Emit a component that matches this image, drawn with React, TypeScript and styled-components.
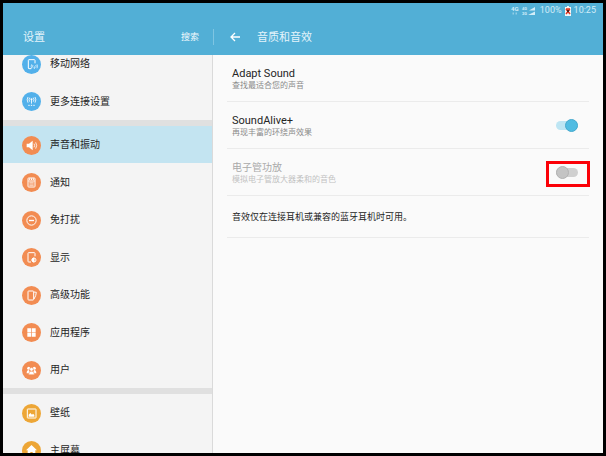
import React, { useState } from "react";
import styled, { createGlobalStyle, css } from "styled-components";

const GlobalStyle = createGlobalStyle`
  *, *::before, *::after { box-sizing: border-box; }
  body {
    margin: 0;
    background: #000;
    font-family: Roboto, "Noto Sans CJK SC", sans-serif;
  }
  button, input { font: inherit; }
`;

const Screen = styled.div`
  height: 100vh;
  padding: 3px;
  background: #000;
  display: flex;
  flex-direction: column;
`;

const TopBar = styled.header`
  flex: none;
  background: #52afd6;
  color: #e4f4fb;
`;

const StatusBar = styled.div`
  display: flex;
  align-items: center;
  justify-content: flex-end;
  gap: 3px;
  height: 15px;
  padding-right: 7px;
  font-size: 9px;
  line-height: 15px;
  color: #d3edf8;
`;

const TitleBar = styled.div`
  display: flex;
  height: 37px;
`;

const sidebarWidth = css`
  flex: 0 0 35%;
`;

const SidebarTitle = styled.div`
  ${sidebarWidth}
  display: flex;
  align-items: center;
  justify-content: space-between;
  padding: 0 14px 0 20px;
`;

const Title = styled.h1`
  margin: 0;
  padding-top: 2px;
  font-size: 11px;
  line-height: 16px;
  font-weight: 400;
`;

const SearchButton = styled.button`
  padding: 0;
  border: 0;
  background: none;
  color: #f2fafd;
  font-size: 9px;
  line-height: 16px;
`;

const DetailTitle = styled.div`
  flex: 1;
  display: flex;
  align-items: center;
  gap: 16px;
`;

const TitleDivider = styled.span`
  width: 1px;
  height: 16px;
  background: #7fc5e2;
`;

const BackButton = styled.button`
  display: flex;
  padding: 0;
  border: 0;
  background: none;
  color: #fff;
`;

const Panels = styled.div`
  flex: 1;
  min-height: 0;
  display: flex;
`;

const Sidebar = styled.nav`
  ${sidebarWidth}
  overflow: hidden;
  background: #f4f4f4;
  border-right: 1px solid #dadada;
`;

const Group = styled.ul<{ $scrolled?: boolean }>`
  list-style: none;
  margin: ${(p) => (p.$scrolled ? "-10px" : "0")} 0 0;
  padding: 0;

  & + & {
    border-top: 6px solid #e0e0e0;
  }
`;

const Entry = styled.li`
  & > a {
    height: 37px;
  }
  &:nth-child(even) > a {
    height: 38px;
  }
`;

const EntryLink = styled.a<{ $active: boolean }>`
  display: flex;
  align-items: center;
  gap: 9px;
  padding: 1px 0 0 19px;
  background: ${(p) => (p.$active ? "#c3e4f1" : "transparent")};
  color: #252525;
  font-size: 10px;
  line-height: 16px;
  text-decoration: none;
`;

const Detail = styled.main`
  flex: 1;
  padding: 0 14px;
  background: #fafafa;
`;

const Setting = styled.div<{ $disabled?: boolean }>`
  display: flex;
  align-items: center;
  justify-content: space-between;
  height: 47px;
  padding: 0 11px 0 5px;
  border-bottom: 1px solid #ebebeb;
  color: ${(p) => (p.$disabled ? "#a9a9a9" : "#252525")};
`;

const SettingText = styled.label`
  display: flex;
  flex-direction: column;
  padding-top: 2px;
`;

const SettingName = styled.span<{ $cjk?: boolean }>`
  font-size: ${(p) => (p.$cjk ? "10px" : "11px")};
  line-height: 13px;
`;

const SettingHint = styled.span<{ $disabled?: boolean }>`
  font-size: 8px;
  line-height: 12px;
  color: ${(p) => (p.$disabled ? "#c2c2c2" : "#8a8a8a")};
`;

const Note = styled.p`
  margin: 0;
  padding: 14px 5px 13px;
  border-bottom: 1px solid #ebebeb;
  color: #252525;
  font-size: 9px;
  line-height: 14px;
`;

const SwitchSlot = styled.span`
  position: relative;
  display: flex;
`;

const Switch = styled.input`
  appearance: none;
  display: grid;
  align-items: center;
  width: 22px;
  height: 13px;
  margin: 0;

  &::before,
  &::after {
    content: "";
    grid-area: 1 / 1;
  }
  &::before {
    height: 9px;
    border-radius: 5px;
    background: #d0d0d0;
  }
  &::after {
    width: 13px;
    height: 13px;
    border-radius: 50%;
    background: #c4c4c4;
    border: 1px solid #b2b2b2;
  }
  &:checked::before {
    background: #bde5f3;
  }
  &:checked::after {
    justify-self: end;
    background: #50bce2;
    border-color: #45a9cd;
  }
`;

const Highlight = styled.span`
  position: absolute;
  inset: -5px -12px -8px -10px;
  border: 3px solid #fb0007;
  pointer-events: none;
`;

type IconName =
  | "mobile" | "more" | "sound" | "notice" | "dnd" | "display"
  | "advanced" | "apps" | "users" | "wallpaper" | "home";

const glyphs: Record<IconName, React.ReactNode> = {
  mobile: (
    <>
      <path d="M28 41H21a2 2 0 0 1-2-2V16a2 2 0 0 1 2-2h16a2 2 0 0 1 2 2v9" />
      <path d="M37 34v8M33 30q-3 4 0 8M41 30q3 4 0 8M29 28q-3 6 0 12M45 28q3 6 0 12" strokeWidth="2" />
    </>
  ),
  more: (
    <>
      <path d="M23 17q-4 6 0 12M34 17q4 6 0 12M18 15q-5 8 0 17M39 15q5 8 0 17M28.500 24v11" strokeWidth="2.500" />
      <circle cx="28.500" cy="22" r="3" fill="currentColor" stroke="none" />
      <path d="M19 40h4M26.500 40h4M34 40h4" />
    </>
  ),
  sound: (
    <>
      <path d="M14 23h7l11-9v29l-11-9h-7z" fill="currentColor" stroke="none" />
      <path d="M36 23q4 5.500 0 11M41 19q6 9.500 0 19" strokeWidth="2.500" />
    </>
  ),
  notice: (
    <>
      <rect x="18" y="15" width="21" height="27" rx="2" />
      <path d="M19 24h19" />
      <path d="M23 16v5M28.500 16v5M34 16v5" strokeWidth="3" />
      <path d="M22 29h13M22 33h13M22 37h13" strokeWidth="2" />
    </>
  ),
  dnd: (
    <>
      <circle cx="28.500" cy="28.500" r="14" />
      <path d="M21 28.500h15" strokeWidth="4" />
    </>
  ),
  display: (
    <>
      <path d="M27 42H20a2 2 0 0 1-2-2V16a2 2 0 0 1 2-2h17a2 2 0 0 1 2 2v9" />
      <circle cx="36" cy="36" r="6" />
      <path d="M36 30a6 6 0 0 0 0 12z" fill="currentColor" />
    </>
  ),
  advanced: (
    <>
      <rect x="18" y="15" width="17" height="27" rx="2" />
      <path d="M36 18l7 1-2 10-5 10" />
    </>
  ),
  apps: (
    <path
      d="M16 16h11.500v11.500H16zM29.500 16H41v11.500H29.500zM16 29.500h11.500V41H16zM29.500 29.500H41V41H29.500z"
      fill="currentColor" stroke="none"
    />
  ),
  users: (
    <g fill="currentColor" stroke="none">
      <circle cx="20" cy="22" r="4.500" />
      <circle cx="37" cy="22" r="4.500" />
      <path d="M14 37q0-10 7-10l3 10zM43 37q0-10-7-10l-3 10z" />
      <g stroke="#f28c52" strokeWidth="1.500">
        <path d="M20 41q0-11 8.500-11T37 41z" />
        <circle cx="28.500" cy="25" r="5.500" />
      </g>
    </g>
  ),
  wallpaper: (
    <>
      <rect x="16" y="15" width="26" height="27" rx="1" />
      <path d="M20 38v-6l5-5 5 5 3-3 4 4v5z" fill="currentColor" stroke="none" />
    </>
  ),
  home: (
    <path
      d="M28.500 12L45 28h-5v13h-8v-8h-7v8h-8V28h-5z"
      fill="currentColor" stroke="none"
    />
  ),
};

const Disc = styled.svg`
  flex: none;
  width: 19px;
  height: 19px;
  color: #fff;
`;

const EntryIcon = ({ name, color }: { name: IconName; color: string }) => (
  <Disc viewBox="0 0 57 57" fill="none" stroke="currentColor" strokeWidth="3" aria-hidden="true">
    <circle cx="28.5" cy="28.5" r="28.5" fill={color} stroke="none" />
    {glyphs[name]}
  </Disc>
);

const groups: { color: string; items: [IconName, string][] }[] = [
  { color: "#52b0ea", items: [["mobile", "移动网络"], ["more", "更多连接设置"]] },
  {
    color: "#f28c52",
    items: [
      ["sound", "声音和振动"],
      ["notice", "通知"],
      ["dnd", "免打扰"],
      ["display", "显示"],
      ["advanced", "高级功能"],
      ["apps", "应用程序"],
      ["users", "用户"],
    ],
  },
  { color: "#eda636", items: [["wallpaper", "壁纸"], ["home", "主屏幕"]] },
];

const NetworkIcons = () => (
  <svg width="26" height="10" viewBox="0 0 26 10" fill="currentColor" aria-hidden="true">
    <g fontFamily="Roboto, sans-serif" fontWeight="700">
      <text x="0" y="5" fontSize="6">4G</text>
      <text x="11" y="4" fontSize="4">4G</text>
      <text x="11" y="9" fontSize="4">2G</text>
    </g>
    <path d="M1.500 6.500h1.500v2H1.500zM4.500 6.500h1.500v2H4.500z" opacity="0.5" />
    <path d="M24 1v3.500h-6zM24 5.500V9h-7z" />
  </svg>
);

const BatteryIcon = () => (
  <svg width="6" height="10" viewBox="0 0 6 10" aria-hidden="true">
    <path d="M2 0h2v1h2v9H0V1h2z" fill="#f3f7f8" />
    <path d="M1 3l4 5M5 3L1 8M1 3h4" stroke="#e0331f" strokeWidth="1.500" fill="none" />
    <path d="M2 4h2v2H2z" fill="#51201b" />
  </svg>
);

const BackArrow = () => (
  <svg width="11" height="10" viewBox="0 0 11 10" fill="none" stroke="currentColor" strokeWidth="1.300" aria-hidden="true">
    <path d="M10 5H1M5 1L1 5l4 4" />
  </svg>
);

export default function App() {
  const [active, setActive] = useState("声音和振动");
  const [soundAlive, setSoundAlive] = useState(true);

  return (
    <>
      <GlobalStyle />
      <Screen lang="zh-CN">
        <TopBar>
          <StatusBar>
            <NetworkIcons />
            <span>100%</span>
            <BatteryIcon />
            <span>10:25</span>
          </StatusBar>
          <TitleBar>
            <SidebarTitle>
              <Title>设置</Title>
              <SearchButton type="button">搜索</SearchButton>
            </SidebarTitle>
            <DetailTitle>
              <TitleDivider />
              <BackButton type="button" aria-label="返回">
                <BackArrow />
              </BackButton>
              <Title as="h2">音质和音效</Title>
            </DetailTitle>
          </TitleBar>
        </TopBar>
        <Panels>
          <Sidebar>
            {groups.map((group, index) => (
              <Group key={group.color} $scrolled={index === 0}>
                {group.items.map(([icon, label]) => (
                  <Entry key={label}>
                    <EntryLink
                      href={`#${icon}`}
                      $active={label === active}
                      onClick={() => setActive(label)}
                    >
                      <EntryIcon name={icon} color={group.color} />
                      {label}
                    </EntryLink>
                  </Entry>
                ))}
              </Group>
            ))}
          </Sidebar>
          <Detail>
            <Setting>
              <SettingText as="div">
                <SettingName>Adapt Sound</SettingName>
                <SettingHint>查找最适合您的声音</SettingHint>
              </SettingText>
            </Setting>
            <Setting>
              <SettingText htmlFor="sound-alive">
                <SettingName>SoundAlive+</SettingName>
                <SettingHint>再现丰富的环绕声效果</SettingHint>
              </SettingText>
              <SwitchSlot>
                <Switch
                  id="sound-alive"
                  type="checkbox"
                  role="switch"
                  checked={soundAlive}
                  onChange={(e) => setSoundAlive(e.target.checked)}
                />
              </SwitchSlot>
            </Setting>
            <Setting $disabled>
              <SettingText htmlFor="tube-amp">
                <SettingName $cjk>电子管功放</SettingName>
                <SettingHint $disabled>模拟电子管放大器柔和的音色</SettingHint>
              </SettingText>
              <SwitchSlot>
                <Switch id="tube-amp" type="checkbox" role="switch" disabled />
                <Highlight />
              </SwitchSlot>
            </Setting>
            <Note>音效仅在连接耳机或兼容的蓝牙耳机时可用。</Note>
          </Detail>
        </Panels>
      </Screen>
    </>
  );
}
